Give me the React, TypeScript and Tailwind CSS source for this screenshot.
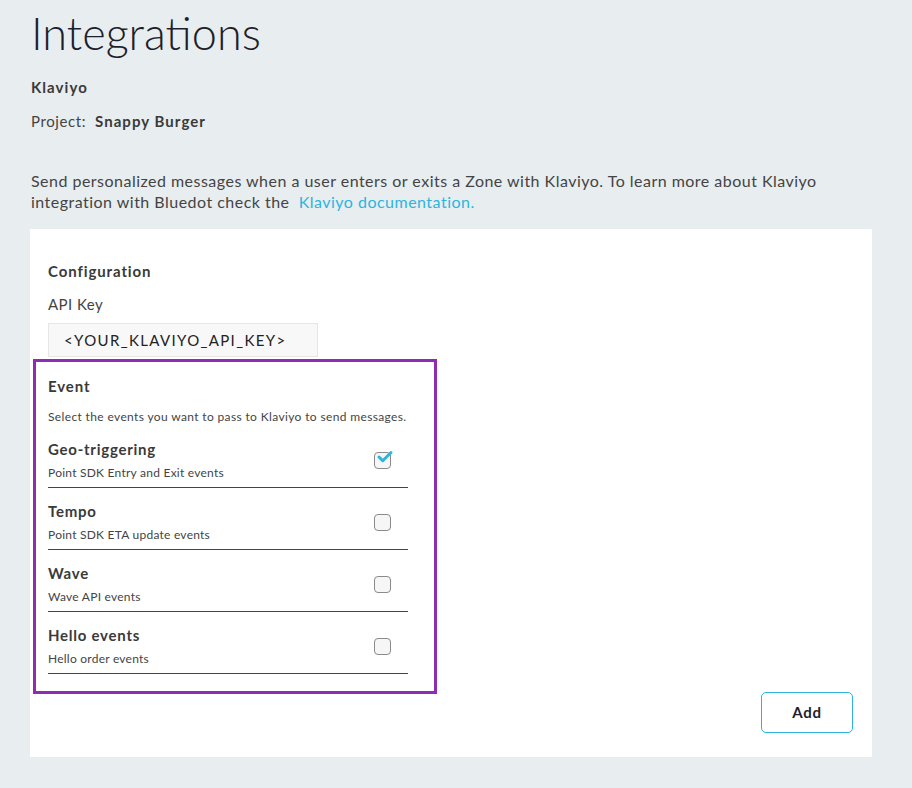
import { Check } from "lucide-react";

const events = [
  { title: "Geo-triggering", sub: "Point SDK Entry and Exit events", checked: true },
  { title: "Tempo", sub: "Point SDK ETA update events", checked: false },
  { title: "Wave", sub: "Wave API events", checked: false },
  { title: "Hello events", sub: "Hello order events", checked: false },
];

function EventRow({ title, sub, checked }: { title: string; sub: string; checked: boolean }) {
  return (
    <div className="flex items-center justify-between w-[360px] h-[62px] border-b border-[#444] pt-[7px]">
      <div className="flex flex-col">
        <span className="text-[15px] font-bold tracking-[0.05em] leading-[20px] text-[#3a3a3a]">{title}</span>
        <span className="text-[12px] tracking-[0.02em] leading-[16px] mt-[6px] text-[#444]">{sub}</span>
      </div>
      <div className="mr-[17px] w-[17px] h-[17px] rounded-[4px] border border-[#8a8a8a] bg-[#f6f6f6] relative">
        {checked && (
          <Check className="absolute -top-[5px] left-[1px] w-[18px] h-[18px] text-[#2bb5de]" strokeWidth={4} />
        )}
      </div>
    </div>
  );
}

export default function App() {
  return (
    <div
      className="min-h-[788px] bg-[#e8edf0] pl-[30px] pr-[40px] pt-[8px] text-[#333]"
      style={{ fontFamily: "Lato, 'Open Sans', sans-serif" }}
    >
      <h1 className="text-[45px] font-light leading-[50px] text-[#1d1e2c] ml-[1px]">Integrations</h1>
      <div className="mt-[19px] ml-[1px] text-[15px] font-bold tracking-[0.07em] leading-[20px] text-[#3a3a3a]">
        Klaviyo
      </div>
      <div className="mt-[14px] ml-[1px] text-[15px] tracking-[0.04em] leading-[20px] text-[#444]">
        Project:{"\u00a0\u00a0"}<span className="font-bold tracking-[0.07em] text-[#3a3a3a]">Snappy Burger</span>
      </div>
      <p className="mt-[39px] ml-[1px] max-w-[840px] text-[16px] tracking-[0.03em] leading-[21px] text-[#444]">
        Send personalized messages when a user enters or exits a Zone with Klaviyo. To learn more about Klaviyo
        integration with Bluedot check the{" \u00a0"}
        <span className="text-[#2bb5de]">Klaviyo documentation.</span>
      </p>

      <div className="mt-[17px] bg-white pl-[18px] pt-[32px] pb-[24px] pr-[18px]">
        <div className="text-[15px] font-bold tracking-[0.06em] leading-[20px] text-[#3a3a3a]">Configuration</div>
        <div className="mt-[13px] text-[15px] tracking-[0.03em] leading-[20px] text-[#444]">API Key</div>
        <div className="mt-[9px] w-[270px] h-[34px] bg-[#f8f8f8] border border-[#e6e6e6] pl-[15px] flex items-center text-[15px] tracking-[0.09em] text-[#222]">
          {"<YOUR_KLAVIYO_API_KEY>"}
        </div>
        <div className="-ml-[15px] mt-[2px] w-[404px] border-[3px] border-[#8e2db3] pl-[12px] pt-[14px] pb-[17px]">
          <div className="text-[15px] font-bold tracking-[0.06em] leading-[20px] text-[#3a3a3a]">Event</div>
          <div className="mt-[13px] text-[12px] tracking-[0.03em] leading-[16px] text-[#444]">
            Select the events you want to pass to Klaviyo to send messages.
          </div>
          <div className="mt-[1px]">
            {events.map((e) => (
              <EventRow key={e.title} {...e} />
            ))}
          </div>
        </div>
        <div className="flex justify-end -mt-[2px] pr-[1px]">
          <button className="w-[92px] h-[41px] rounded-[5px] border border-[#2bb5de] text-[15px] font-bold tracking-[0.05em] text-[#1d1e2c]">
            Add
          </button>
        </div>
      </div>
    </div>
  );
}
